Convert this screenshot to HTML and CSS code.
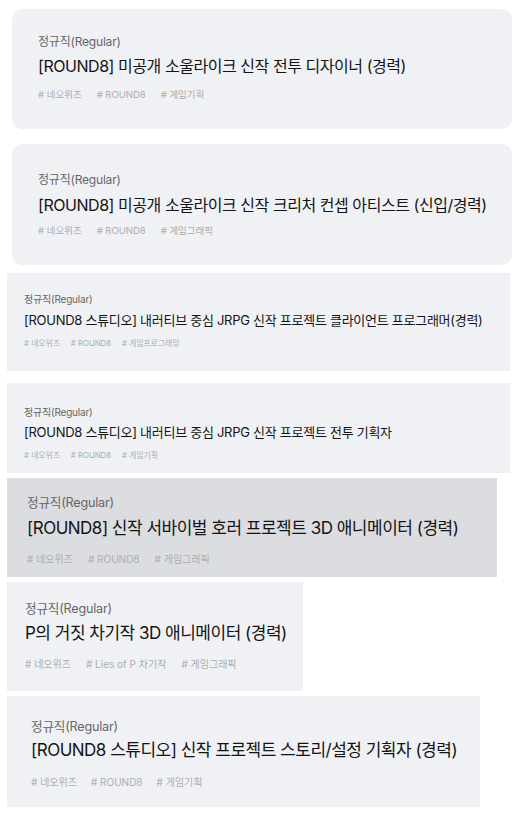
FILE: index.html
```html
<!DOCTYPE html>
<html lang="ko">

<head>
    <meta charset="UTF-8">
    <meta name="viewport" content="width=device-width, initial-scale=1.0">
    <title>채용 공고</title>
    <link rel="stylesheet" href="styles.css">
</head>

<body>
    <div class="job-list">
        <div class="job job-md job-1">
            <div class="job-type">정규직(Regular)</div>
            <div class="job-title">[ROUND8] 미공개 소울라이크 신작 전투 디자이너 (경력)</div>
            <div class="job-tags"><span># 네오위즈</span><span># ROUND8</span><span># 게임기획</span></div>
        </div>
        <div class="job job-md job-2">
            <div class="job-type">정규직(Regular)</div>
            <div class="job-title">[ROUND8] 미공개 소울라이크 신작 크리처 컨셉 아티스트 (신입/경력)</div>
            <div class="job-tags"><span># 네오위즈</span><span># ROUND8</span><span># 게임그래픽</span></div>
        </div>
        <div class="job job-sm job-3">
            <div class="job-type">정규직(Regular)</div>
            <div class="job-title">[ROUND8 스튜디오] 내러티브 중심 JRPG 신작 프로젝트 클라이언트 프로그래머(경력)</div>
            <div class="job-tags"><span># 네오위즈</span><span># ROUND8</span><span># 게임프로그래밍</span></div>
        </div>
        <div class="job job-sm job-4">
            <div class="job-type">정규직(Regular)</div>
            <div class="job-title">[ROUND8 스튜디오] 내러티브 중심 JRPG 신작 프로젝트 전투 기획자</div>
            <div class="job-tags"><span># 네오위즈</span><span># ROUND8</span><span># 게임기획</span></div>
        </div>
        <div class="job job-lg job-5 hover">
            <div class="job-type">정규직(Regular)</div>
            <div class="job-title">[ROUND8] 신작 서바이벌 호러 프로젝트 3D 애니메이터 (경력)</div>
            <div class="job-tags"><span># 네오위즈</span><span># ROUND8</span><span># 게임그래픽</span></div>
        </div>
        <div class="job job-lg job-6">
            <div class="job-type">정규직(Regular)</div>
            <div class="job-title">P의 거짓 차기작 3D 애니메이터 (경력)</div>
            <div class="job-tags"><span># 네오위즈</span><span># Lies of P 차기작</span><span># 게임그래픽</span></div>
        </div>
        <div class="job job-lg job-7">
            <div class="job-type">정규직(Regular)</div>
            <div class="job-title">[ROUND8 스튜디오] 신작 프로젝트 스토리/설정 기획자 (경력)</div>
            <div class="job-tags"><span># 네오위즈</span><span># ROUND8</span><span># 게임기획</span></div>
        </div>
    </div>
</body>

</html>
```

FILE: styles.css
```css
body {
    margin: 0;
    background-color: #fff;
    font-family: Inter, "Noto Sans CJK KR", sans-serif;
}

.job-list {
    display: flex;
    flex-direction: column;
    align-items: flex-start;
}

.job {
    box-sizing: border-box;
    display: flex;
    flex-direction: column;
    background-color: #f0f1f5;
    white-space: nowrap;
}

.job.hover {
    background-color: #dcdde1;
}

.job-type {
    color: #666;
    letter-spacing: -0.2px;
}

.job-title {
    color: #141414;
}

.job-tags {
    display: flex;
    color: #acadb0;
}

/* sizes */
.job-md {
    border-radius: 10px;
}

.job-md .job-type {
    font-size: 12px;
    line-height: 16px;
}

.job-md .job-title {
    font-size: 16px;
    line-height: 22px;
    letter-spacing: -0.45px;
}

.job-md .job-tags {
    font-size: 9.5px;
    line-height: 14px;
    gap: 15px;
}

.job-sm .job-type {
    font-size: 10px;
    line-height: 14px;
}

.job-sm .job-title {
    font-size: 13px;
    line-height: 18px;
    letter-spacing: -0.27px;
}

.job-sm .job-tags {
    font-size: 7.8px;
    line-height: 12px;
    gap: 11px;
}

.job-lg .job-type {
    font-size: 12.6px;
    line-height: 17px;
}

.job-lg .job-title {
    font-size: 17px;
    line-height: 24px;
    letter-spacing: -0.5px;
}

.job-lg .job-tags {
    font-size: 10px;
    line-height: 14px;
    gap: 15px;
}

/* placement of each card */
.job-1 {
    margin: 9px 0 0 12px;
    width: 500px;
    height: 120px;
    padding: 25px 26px 0;
}

.job-1 .job-title {
    margin: 5px 0 11px;
}

.job-2 {
    margin: 15px 0 0 12px;
    width: 500px;
    height: 121px;
    padding: 28px 26px 0;
}

.job-2 .job-title {
    margin: 6px 0 8px;
}

.job-3 {
    margin: 8px 0 0 7px;
    width: 503px;
    height: 98px;
    padding: 19px 17px 0;
}

.job-3 .job-title {
    margin: 5px 0 8px;
}

.job-4 {
    margin: 12px 0 0 7px;
    width: 503px;
    height: 90px;
    padding: 22px 17px 0;
}

.job-4 .job-title {
    margin: 4px 0 8px;
}

.job-5 {
    margin: 5px 0 0 7px;
    width: 490px;
    height: 99px;
    padding: 16px 20px 0;
}

.job-5 .job-title {
    margin: 5px 0 12px;
}

.job-6 {
    margin: 5px 0 0 7px;
    width: 296px;
    height: 109px;
    padding: 18px 18px 0;
}

.job-6 .job-title {
    margin: 4px 0 12px;
}

.job-7 {
    margin: 5px 0 0 7px;
    width: 473px;
    height: 111px;
    padding: 22px 24px 0;
}

.job-7 .job-title {
    margin: 3px 0 13px;
}

.job-7 .job-tags {
    gap: 14px;
}
```
